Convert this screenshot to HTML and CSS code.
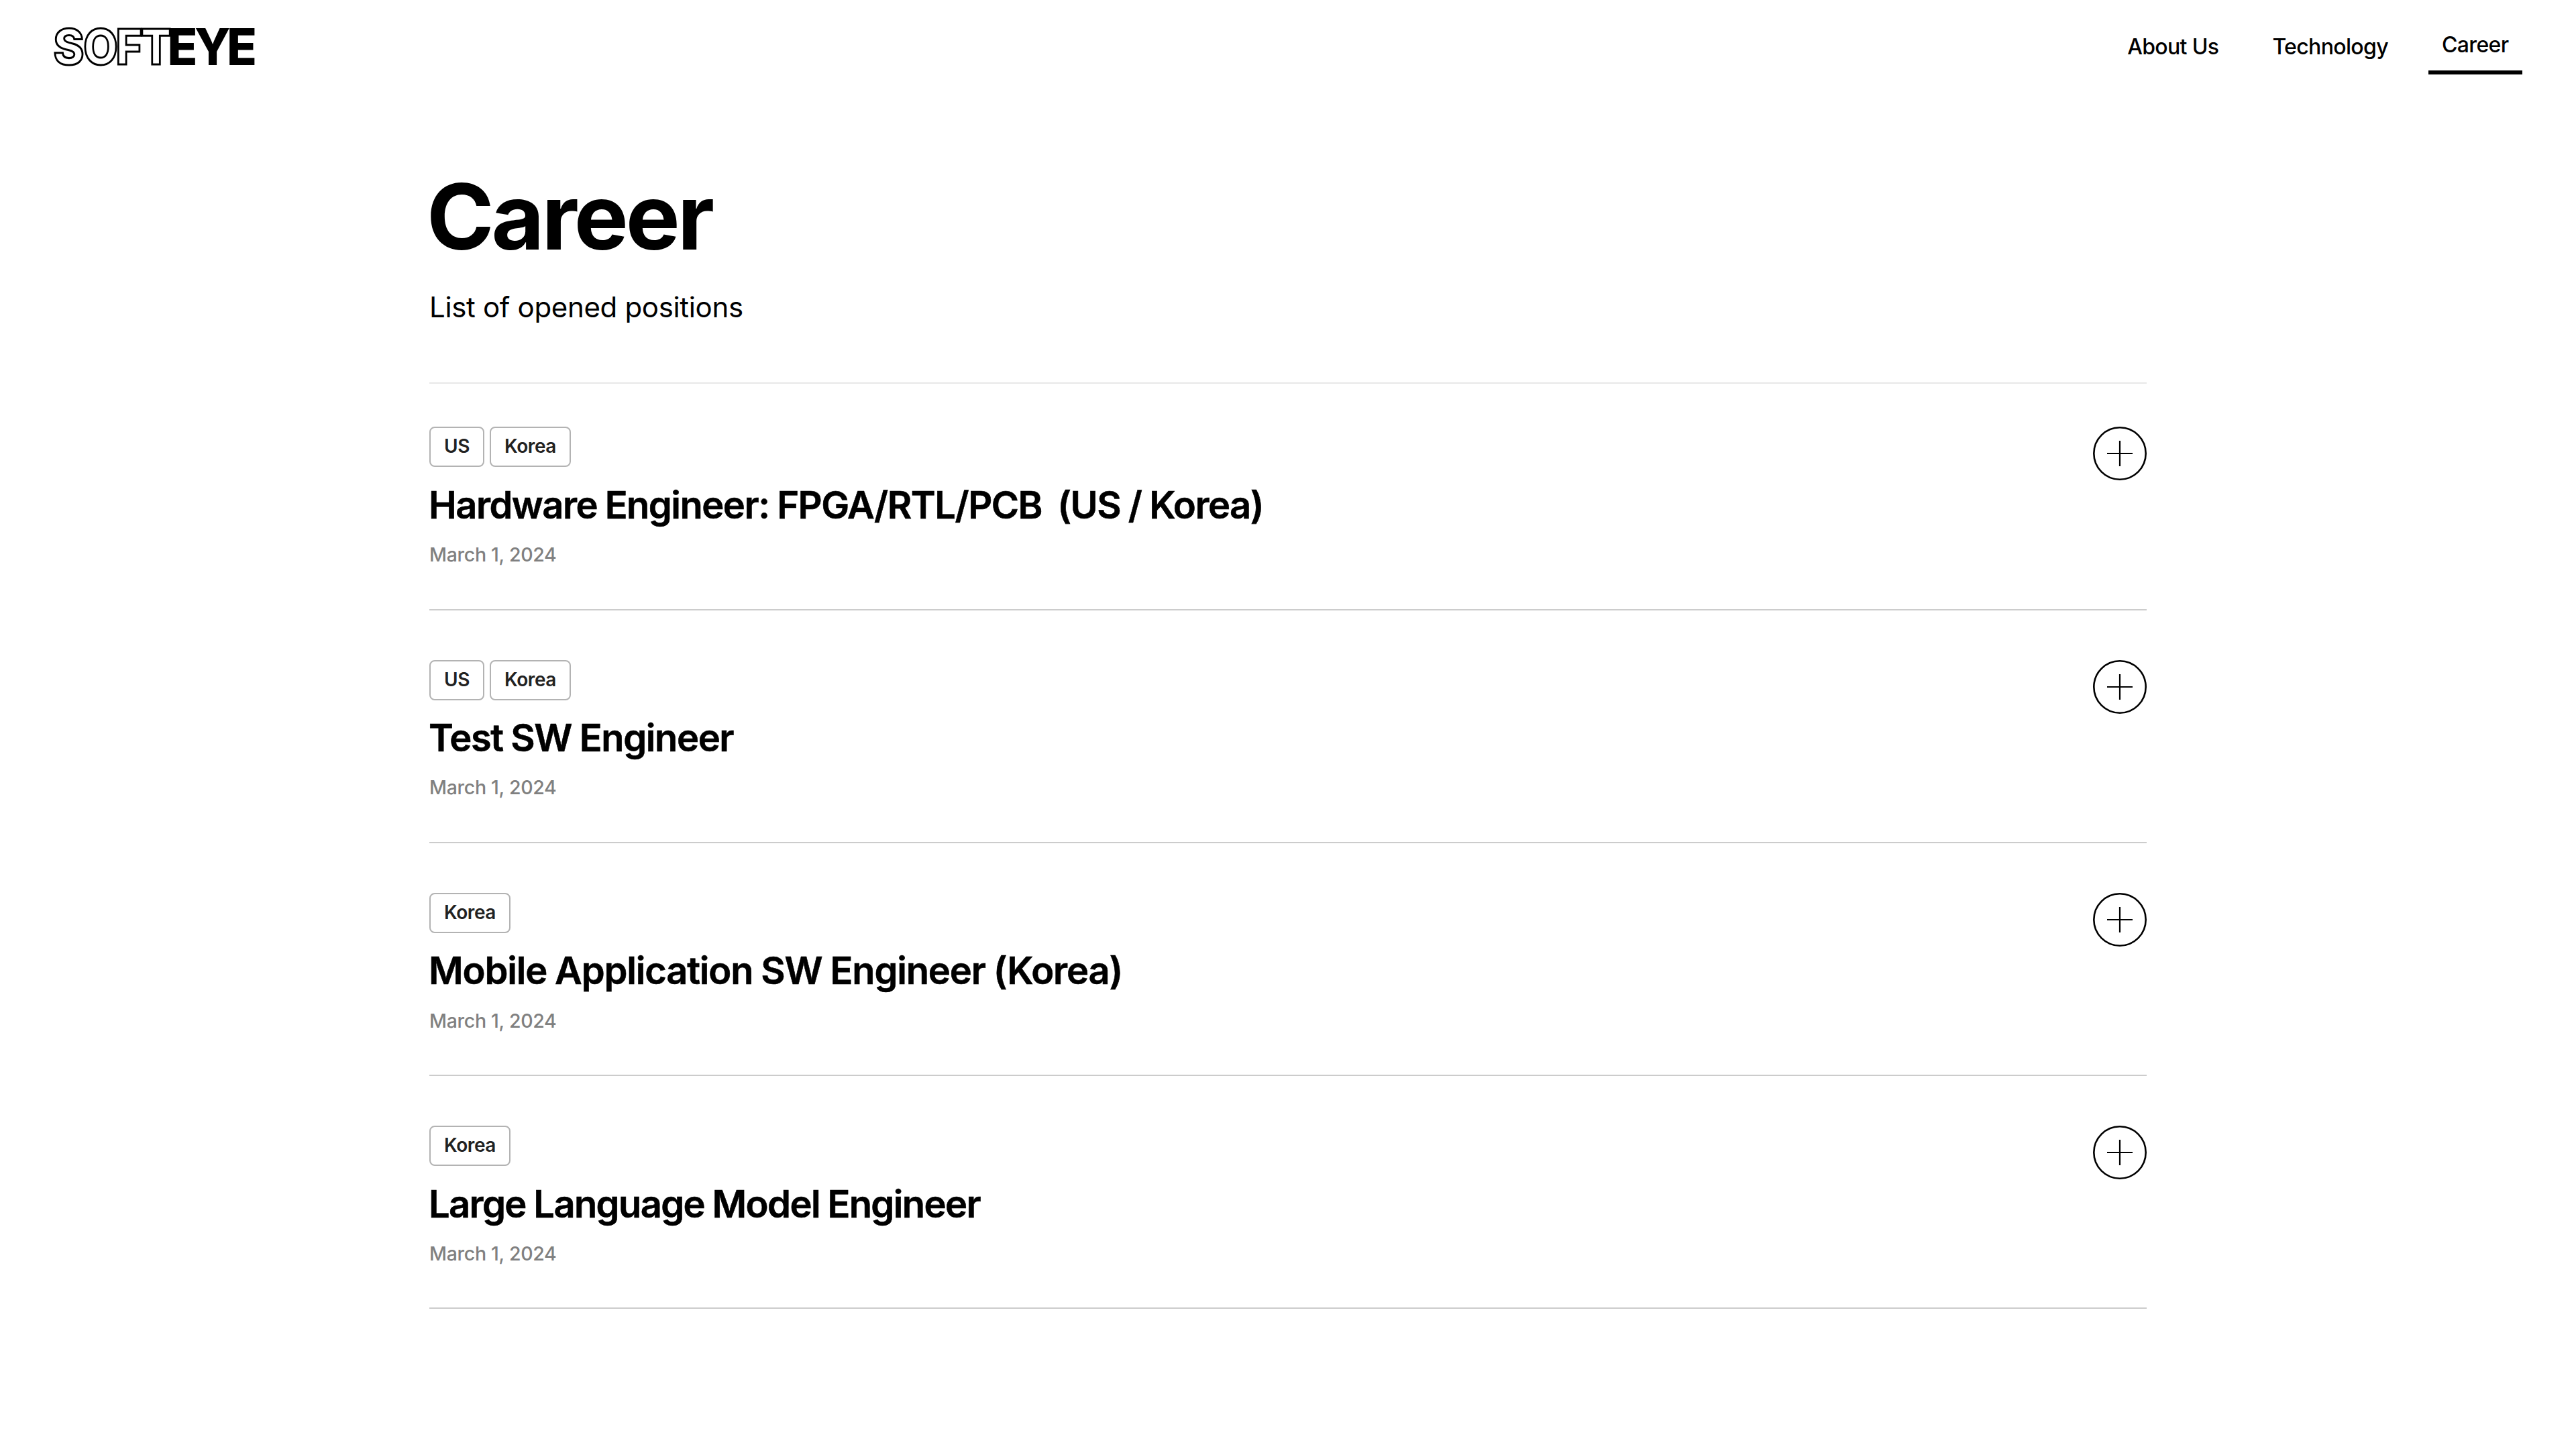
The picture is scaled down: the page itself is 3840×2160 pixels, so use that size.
FILE: index.html
```
<!DOCTYPE html>
<html lang="en">
<head>
	<meta charset="UTF-8">
	<title>SOFTEYE - Career</title>
	<link rel="stylesheet" href="styles.css">
</head>
<body>
	<header class="header">
		<a class="logo" href="#">
			<svg width="304" height="64" viewBox="0 0 304 64">
				<g class="logo-line">
					<text transform="translate(-0.5 57.6) scale(0.96 1)">S</text>
					<text transform="translate(44.2 57.6) scale(0.92 1)">O</text>
					<text transform="translate(92.6 57.6) scale(0.94 1)">F</text>
					<text transform="translate(129.8 57.6) scale(0.93 1)">T</text>
				</g>
				<g class="logo-fill">
					<text transform="translate(169.6 58.9) scale(0.97 1)">E</text>
					<text transform="translate(210.3 58.9) scale(0.93 1)">Y</text>
					<text transform="translate(258 58.9) scale(0.97 1)">E</text>
				</g>
			</svg>
		</a>
		<ul class="nav">
			<li><a href="#">About Us</a></li>
			<li><a href="#">Technology</a></li>
			<li class="active"><a href="#">Career</a></li>
		</ul>
	</header>
	<div class="main">
		<h1 class="title">Career</h1>
		<p class="desc">List of opened positions</p>
		<ul class="list">
			<li class="item">
				<div class="info">
					<div class="tags"><span>US</span><span>Korea</span></div>
					<h2 class="name">Hardware Engineer: FPGA/RTL/PCB  (US / Korea)</h2>
					<p class="date">March 1, 2024</p>
				</div>
				<svg class="plus" viewBox="0 0 80 80"><circle cx="40" cy="40" r="38.7"/><path d="M21 40H59M40 21V59"/></svg>
			</li>
			<li class="item">
				<div class="info">
					<div class="tags"><span>US</span><span>Korea</span></div>
					<h2 class="name">Test SW Engineer</h2>
					<p class="date">March 1, 2024</p>
				</div>
				<svg class="plus" viewBox="0 0 80 80"><circle cx="40" cy="40" r="38.7"/><path d="M21 40H59M40 21V59"/></svg>
			</li>
			<li class="item">
				<div class="info">
					<div class="tags"><span>Korea</span></div>
					<h2 class="name">Mobile Application SW Engineer (Korea)</h2>
					<p class="date">March 1, 2024</p>
				</div>
				<svg class="plus" viewBox="0 0 80 80"><circle cx="40" cy="40" r="38.7"/><path d="M21 40H59M40 21V59"/></svg>
			</li>
			<li class="item">
				<div class="info">
					<div class="tags"><span>Korea</span></div>
					<h2 class="name">Large Language Model Engineer</h2>
					<p class="date">March 1, 2024</p>
				</div>
				<svg class="plus" viewBox="0 0 80 80"><circle cx="40" cy="40" r="38.7"/><path d="M21 40H59M40 21V59"/></svg>
			</li>
		</ul>
	</div>
</body>
</html>
```
FILE: styles.css
```
*{
	margin: 0;
	padding: 0;
	box-sizing: border-box;
}
body{
	background: #fff;
	color: #000;
	font-family: Inter, "Liberation Sans", sans-serif;
}
ul{
	list-style: none;
}
a{
	color: inherit;
	text-decoration: none;
}

/* header */
.header{
	display: flex;
	justify-content: space-between;
	align-items: flex-start;
	height: 140px;
	padding: 0 80px;
}
.logo{
	padding-top: 38px;
}
.logo svg{
	display: block;
	overflow: visible;
}
.logo text{
	font-weight: 800;
}
.logo-line text{
	font-size: 72.5px;
	fill: #fff;
	stroke: #000;
	stroke-width: 3px;
}
.logo-fill text{
	font-size: 76px;
}
.nav{
	display: flex;
	gap: 40px;
	padding-top: 50px;
	font-size: 32px;
	font-weight: 500;
	line-height: 40px;
	letter-spacing: -0.65px;
}
.nav li{
	padding: 0 20px;
}
.nav .active{
	width: 140px;
	height: 64px;
	margin-top: -3px;
	border-bottom: 6px solid #000;
}

/* main */
.main{
	width: 2560px;
	margin: 0 auto;
	padding-top: 103px;
}
.title{
	margin-left: -4px;
	font-size: 136px;
	font-weight: 700;
	line-height: 160px;
	letter-spacing: -4px;
}
.desc{
	margin-top: 31px;
	font-size: 42px;
	line-height: 48px;
	letter-spacing: -0.33px;
}
.list{
	margin-top: 88px;
	border-top: 2px solid #e8e8e8;
}
.item{
	display: flex;
	justify-content: space-between;
	height: 347.2px;
	padding-top: 73.9px;
	border-bottom: 2px solid #ccc;
}
.item:first-child{
	height: 337.7px;
	padding-top: 64.4px;
}
.tags{
	display: flex;
	gap: 8px;
}
.tags span{
	height: 60px;
	padding: 0 20px;
	border: 2px solid #b3b3b3;
	border-radius: 8px;
	color: #222;
	font-size: 28px;
	font-weight: 600;
	line-height: 54px;
	letter-spacing: -0.4px;
}
.name{
	margin-top: 24.6px;
	margin-left: -1px;
	font-size: 56px;
	font-weight: 600;
	line-height: 64px;
	letter-spacing: -1.5px;
	word-spacing: -1px;
	white-space: pre;
	-webkit-text-stroke: 0.6px #000;
}
.item:nth-child(2) .name{
	letter-spacing: -1.4px;
}
.item:nth-child(3) .name{
	letter-spacing: -1.16px;
}
.item:nth-child(4) .name{
	letter-spacing: -1.62px;
}
.date{
	margin-top: 24.2px;
	color: #808080;
	font-size: 28.5px;
	font-weight: 500;
	line-height: 36px;
	letter-spacing: -0.3px;
}
.plus{
	width: 80px;
	height: 80px;
	fill: none;
	stroke: #000;
	stroke-width: 2.6;
}
.plus path{
	stroke-width: 2.2;
}
```
